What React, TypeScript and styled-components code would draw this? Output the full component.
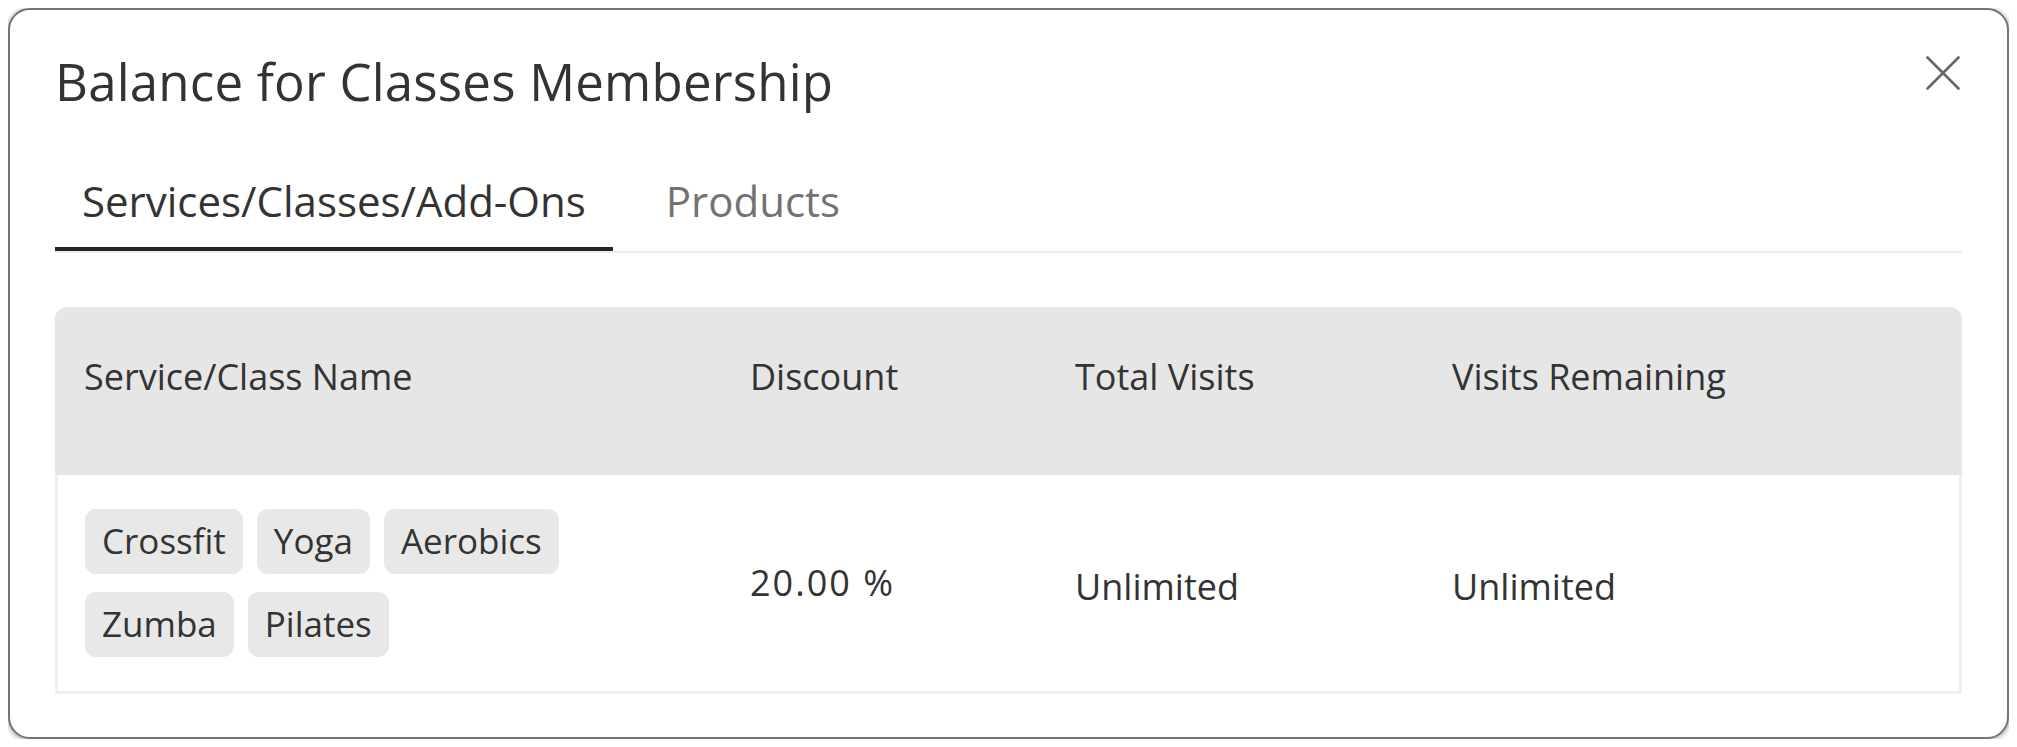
import React from "react";
import styled, { createGlobalStyle } from "styled-components";

const GlobalStyle = createGlobalStyle`
  html, body { background: #ffffff; }
  body {
    margin: 8px;
    font-family: "Open Sans", "Noto Sans", "Liberation Sans", sans-serif;
    color: #333333;
    -webkit-font-smoothing: antialiased;
  }
  * { box-sizing: border-box; }
`;

const Modal = styled.div`
  width: 100%;
  height: 731px;
  background: #ffffff;
  border: 2px solid #747474;
  border-radius: 22px;
  box-shadow: 0 1px 5px 1px rgba(0, 0, 0, 0.3);
  padding: 41px 45px 0 45px;
  display: flex;
  flex-direction: column;
`;

const Header = styled.div`
  display: flex;
  align-items: flex-start;
  justify-content: space-between;
`;

const Title = styled.h2`
  margin: 0;
  font-size: 51px;
  line-height: 60px;
  font-weight: 400;
  color: #333333;
  letter-spacing: 0.2px;
`;

const CloseButton = styled.button`
  margin: 5px 2px 0 0;
  padding: 0;
  width: 34px;
  height: 34px;
  border: none;
  background: transparent;
  display: flex;
  align-items: center;
  justify-content: center;
  cursor: pointer;
`;

const TabBar = styled.div`
  display: flex;
  gap: 26px;
  margin-top: 65px;
  border-bottom: 2px solid #ececec;
`;

const Tab = styled.div<{ $active?: boolean }>`
  padding: 0 27px 21px 27px;
  font-size: 42px;
  line-height: 50px;
  font-weight: 400;
  color: ${(p) => (p.$active ? "#333333" : "#727272")};
  border-bottom: 4px solid ${(p) => (p.$active ? "#262626" : "transparent")};
  cursor: pointer;
`;

const Table = styled.div`
  margin-top: 54px;
  display: grid;
  grid-template-columns: 666px 325px 377px 1fr;
`;

const HeadCell = styled.div<{ $first?: boolean; $last?: boolean }>`
  background: #e6e6e6;
  padding: 48px 29px 76px 29px;
  font-size: 36px;
  line-height: 44px;
  font-weight: 400;
  color: #333333;
  border-top-left-radius: ${(p) => (p.$first ? "12px" : "0")};
  border-top-right-radius: ${(p) => (p.$last ? "12px" : "0")};
`;

const BodyCell = styled.div<{ $first?: boolean; $last?: boolean; $shift?: number }>`
  display: flex;
  align-items: center;
  padding: ${(p) => 34 + (p.$shift ?? 0)}px 29px ${(p) => 34 - (p.$shift ?? 0)}px
    ${(p) => (p.$first ? "27px" : "29px")};
  font-size: 36px;
  line-height: 44px;
  color: #333333;
  border-bottom: 3px solid #f0f0f0;
  border-left: ${(p) => (p.$first ? "3px solid #f0f0f0" : "none")};
  border-right: ${(p) => (p.$last ? "3px solid #f0f0f0" : "none")};
`;

const Percent = styled.span`
  letter-spacing: 2px;
`;

const ChipList = styled.div`
  display: flex;
  flex-wrap: wrap;
  column-gap: 14px;
  row-gap: 18px;
`;

const Chip = styled.span`
  display: inline-block;
  background: #e8e8e8;
  border-radius: 11px;
  padding: 9px 17px 11px 17px;
  font-size: 35px;
  line-height: 45px;
  color: #333333;
`;

const CloseIcon = () => (
  <svg width="34" height="34" viewBox="0 0 34 34" fill="none">
    <path d="M1.5 1.5 L32.5 32.5 M32.5 1.5 L1.5 32.5" stroke="#666666" strokeWidth="2.6" strokeLinecap="round" />
  </svg>
);

const classes = ["Crossfit", "Yoga", "Aerobics", "Zumba", "Pilates"];

export default function App() {
  return (
    <>
      <GlobalStyle />
      <Modal>
        <Header>
          <Title>Balance for Classes Membership</Title>
          <CloseButton aria-label="Close">
            <CloseIcon />
          </CloseButton>
        </Header>
        <TabBar>
          <Tab $active>Services/Classes/Add-Ons</Tab>
          <Tab>Products</Tab>
        </TabBar>
        <Table>
          <HeadCell $first>Service/Class Name</HeadCell>
          <HeadCell>Discount</HeadCell>
          <HeadCell>Total Visits</HeadCell>
          <HeadCell $last>Visits Remaining</HeadCell>
          <BodyCell $first>
            <ChipList>
              {classes.map((c) => (
                <Chip key={c}>{c}</Chip>
              ))}
            </ChipList>
          </BodyCell>
          <BodyCell>
            <Percent>20.00 %</Percent>
          </BodyCell>
          <BodyCell $shift={4}>Unlimited</BodyCell>
          <BodyCell $last $shift={4}>
            Unlimited
          </BodyCell>
        </Table>
      </Modal>
    </>
  );
}
